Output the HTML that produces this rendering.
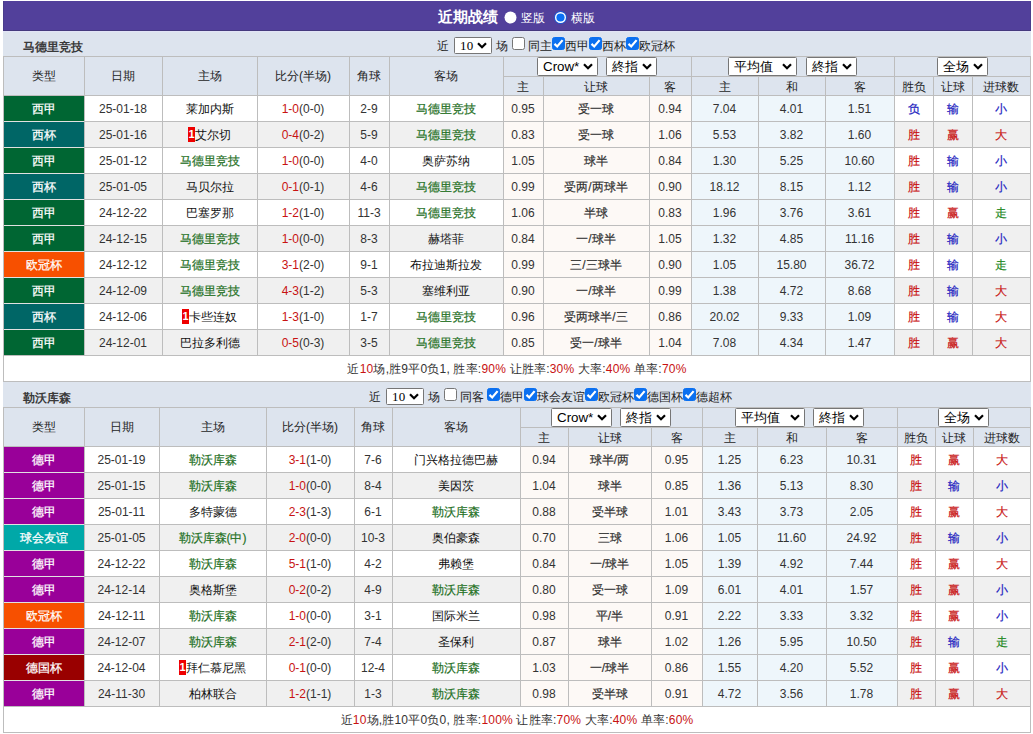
<!DOCTYPE html>
<html><head><meta charset="utf-8"><style>
html,body{margin:0;padding:0;background:#fff;width:1033px;height:734px;overflow:hidden}
body{position:relative;font-family:"Liberation Sans",sans-serif;font-size:12px;color:#333}
.r{position:absolute}
.t{position:absolute;text-align:center;white-space:nowrap;overflow:visible}
.b{font-weight:bold}
.k{-webkit-text-stroke:0.2px currentColor}
.h{color:#1e1e1e}
.lg{color:#fff;-webkit-text-stroke:0.25px #fff}
.rc{display:inline-block;background:#e00;color:#fff;font-weight:bold;width:7px;height:15px;line-height:15px;font-size:11px;text-align:center;vertical-align:middle;margin-top:-2px;position:relative;top:0px}
.cb{position:absolute;width:11px;height:11px;border:1px solid #767676;border-radius:2.5px;background:#fff}
.cb.on{background:#0b70f0;border-color:#0b70f0}
.cb svg{position:absolute;left:-1px;top:-1px}
.sel{position:absolute;border:1px solid #767676;border-radius:1.5px;background:#fff;color:#000;box-sizing:border-box;white-space:nowrap}
#title{position:absolute;left:3px;top:1px;width:1026px;height:29px;background:#52409b;border:1px solid #4a3d8c;border-bottom-color:#453a7e;border-top:0}
</style></head><body>
<div id="title"></div>
<div class="t b" style="left:438px;top:2px;height:30px;line-height:30px;font-size:15px;color:#fff;text-align:left">近期战绩</div>
<svg style="position:absolute;left:504px;top:11px" width="13" height="13" viewBox="0 0 13 13"><circle cx="6.5" cy="6.5" r="6" fill="#fff"/></svg>
<div class="t" style="left:521px;top:3px;height:30px;line-height:30px;color:#fff;text-align:left">竖版</div>
<svg style="position:absolute;left:554px;top:11px" width="13" height="13" viewBox="0 0 13 13"><circle cx="6.5" cy="6.5" r="6.5" fill="#1a5ad8"/><circle cx="6.5" cy="6.5" r="5.5" fill="#fff"/><circle cx="6.5" cy="6.5" r="4.1" fill="#0a70f5"/></svg>
<div class="t" style="left:571px;top:3px;height:30px;line-height:30px;color:#fff;text-align:left">横版</div>
<div class="r" style="left:3px;top:31px;width:1028px;height:25px;background:#dde4ee;"></div><div class="t b" style="left:23px;top:35px;width:200px;height:25px;line-height:25px;text-align:left;color:#3a3a3a">马德里竞技</div><div class="t" style="left:437px;top:34px;width:14px;height:25px;line-height:25px;text-align:left;color:#222">近</div><div class="sel" style="left:454px;top:37px;width:38px;height:17px;line-height:15px;padding-left:5px;font-size:13.33px"><span style="font-family:'Liberation Serif',serif;font-size:13px;letter-spacing:0.3px">10</span><svg style="position:absolute;right:4px;top:4px" width="10" height="7" viewBox="0 0 10 7"><path d="M1 1.2 L5 5.2 L9 1.2" stroke="#000" stroke-width="2.2" fill="none"/></svg></div><div class="t" style="left:496px;top:34px;width:14px;height:25px;line-height:25px;text-align:left;color:#222">场</div><div class="cb" style="left:512px;top:37px"></div><div class="t" style="left:528px;top:34px;width:24px;height:25px;line-height:25px;text-align:left;color:#222">同主</div><div class="cb on" style="left:552px;top:37px"><svg width="13" height="13" viewBox="0 0 13 13"><path d="M2.5 6.9 L5.2 9.5 L10.6 3.1" stroke="#fff" stroke-width="2.2" fill="none"/></svg></div><div class="t" style="left:565px;top:34px;width:24px;height:25px;line-height:25px;text-align:left;color:#222">西甲</div><div class="cb on" style="left:589px;top:37px"><svg width="13" height="13" viewBox="0 0 13 13"><path d="M2.5 6.9 L5.2 9.5 L10.6 3.1" stroke="#fff" stroke-width="2.2" fill="none"/></svg></div><div class="t" style="left:602px;top:34px;width:24px;height:25px;line-height:25px;text-align:left;color:#222">西杯</div><div class="cb on" style="left:626px;top:37px"><svg width="13" height="13" viewBox="0 0 13 13"><path d="M2.5 6.9 L5.2 9.5 L10.6 3.1" stroke="#fff" stroke-width="2.2" fill="none"/></svg></div><div class="t" style="left:639px;top:34px;width:36px;height:25px;line-height:25px;text-align:left;color:#222">欧冠杯</div><div class="r" style="left:3px;top:56px;width:1028px;height:39px;background:#dde4ee;"></div><div class="r" style="left:4px;top:96px;width:1026px;height:25px;background:#ffffff;"></div><div class="r" style="left:504px;top:96px;width:187px;height:25px;background:#fdf9f6;"></div><div class="r" style="left:692px;top:96px;width:202px;height:25px;background:#eef6fb;"></div><div class="r" style="left:4px;top:96px;width:80px;height:25px;background:#006633;"></div><div class="r" style="left:4px;top:122px;width:1026px;height:25px;background:#f0f0f0;"></div><div class="r" style="left:504px;top:122px;width:187px;height:25px;background:#fdf9f6;"></div><div class="r" style="left:692px;top:122px;width:202px;height:25px;background:#eef6fb;"></div><div class="r" style="left:4px;top:121px;width:80px;height:26px;background:#006666;"></div><div class="r" style="left:4px;top:148px;width:1026px;height:25px;background:#ffffff;"></div><div class="r" style="left:504px;top:148px;width:187px;height:25px;background:#fdf9f6;"></div><div class="r" style="left:692px;top:148px;width:202px;height:25px;background:#eef6fb;"></div><div class="r" style="left:4px;top:147px;width:80px;height:26px;background:#006633;"></div><div class="r" style="left:4px;top:174px;width:1026px;height:25px;background:#f0f0f0;"></div><div class="r" style="left:504px;top:174px;width:187px;height:25px;background:#fdf9f6;"></div><div class="r" style="left:692px;top:174px;width:202px;height:25px;background:#eef6fb;"></div><div class="r" style="left:4px;top:173px;width:80px;height:26px;background:#006666;"></div><div class="r" style="left:4px;top:200px;width:1026px;height:25px;background:#ffffff;"></div><div class="r" style="left:504px;top:200px;width:187px;height:25px;background:#fdf9f6;"></div><div class="r" style="left:692px;top:200px;width:202px;height:25px;background:#eef6fb;"></div><div class="r" style="left:4px;top:199px;width:80px;height:26px;background:#006633;"></div><div class="r" style="left:4px;top:226px;width:1026px;height:25px;background:#f0f0f0;"></div><div class="r" style="left:504px;top:226px;width:187px;height:25px;background:#fdf9f6;"></div><div class="r" style="left:692px;top:226px;width:202px;height:25px;background:#eef6fb;"></div><div class="r" style="left:4px;top:225px;width:80px;height:26px;background:#006633;"></div><div class="r" style="left:4px;top:252px;width:1026px;height:25px;background:#ffffff;"></div><div class="r" style="left:504px;top:252px;width:187px;height:25px;background:#fdf9f6;"></div><div class="r" style="left:692px;top:252px;width:202px;height:25px;background:#eef6fb;"></div><div class="r" style="left:4px;top:251px;width:80px;height:26px;background:#f75000;"></div><div class="r" style="left:4px;top:278px;width:1026px;height:25px;background:#f0f0f0;"></div><div class="r" style="left:504px;top:278px;width:187px;height:25px;background:#fdf9f6;"></div><div class="r" style="left:692px;top:278px;width:202px;height:25px;background:#eef6fb;"></div><div class="r" style="left:4px;top:277px;width:80px;height:26px;background:#006633;"></div><div class="r" style="left:4px;top:304px;width:1026px;height:25px;background:#ffffff;"></div><div class="r" style="left:504px;top:304px;width:187px;height:25px;background:#fdf9f6;"></div><div class="r" style="left:692px;top:304px;width:202px;height:25px;background:#eef6fb;"></div><div class="r" style="left:4px;top:303px;width:80px;height:26px;background:#006666;"></div><div class="r" style="left:4px;top:330px;width:1026px;height:25px;background:#f0f0f0;"></div><div class="r" style="left:504px;top:330px;width:187px;height:25px;background:#fdf9f6;"></div><div class="r" style="left:692px;top:330px;width:202px;height:25px;background:#eef6fb;"></div><div class="r" style="left:4px;top:329px;width:80px;height:26px;background:#006633;"></div><div class="r" style="left:4px;top:356px;width:1026px;height:25px;background:#ffffff;"></div><div class="r" style="left:3px;top:56px;width:1028px;height:1px;background:#bdbdbd;"></div><div class="r" style="left:3px;top:95px;width:1028px;height:1px;background:#bdbdbd;"></div><div class="r" style="left:3px;top:121px;width:1028px;height:1px;background:#bdbdbd;"></div><div class="r" style="left:3px;top:147px;width:1028px;height:1px;background:#bdbdbd;"></div><div class="r" style="left:3px;top:173px;width:1028px;height:1px;background:#bdbdbd;"></div><div class="r" style="left:3px;top:199px;width:1028px;height:1px;background:#bdbdbd;"></div><div class="r" style="left:3px;top:225px;width:1028px;height:1px;background:#bdbdbd;"></div><div class="r" style="left:3px;top:251px;width:1028px;height:1px;background:#bdbdbd;"></div><div class="r" style="left:3px;top:277px;width:1028px;height:1px;background:#bdbdbd;"></div><div class="r" style="left:3px;top:303px;width:1028px;height:1px;background:#bdbdbd;"></div><div class="r" style="left:3px;top:329px;width:1028px;height:1px;background:#bdbdbd;"></div><div class="r" style="left:3px;top:355px;width:1028px;height:1px;background:#bdbdbd;"></div><div class="r" style="left:3px;top:381px;width:1028px;height:1px;background:#bdbdbd;"></div><div class="r" style="left:503px;top:76px;width:527px;height:1px;background:#bdbdbd;"></div><div class="r" style="left:3px;top:56px;width:1px;height:326px;background:#bdbdbd;"></div><div class="r" style="left:84px;top:56px;width:1px;height:299px;background:#bdbdbd;"></div><div class="r" style="left:162px;top:56px;width:1px;height:299px;background:#bdbdbd;"></div><div class="r" style="left:257px;top:56px;width:1px;height:299px;background:#bdbdbd;"></div><div class="r" style="left:349px;top:56px;width:1px;height:299px;background:#bdbdbd;"></div><div class="r" style="left:389px;top:56px;width:1px;height:299px;background:#bdbdbd;"></div><div class="r" style="left:503px;top:56px;width:1px;height:299px;background:#bdbdbd;"></div><div class="r" style="left:543px;top:76px;width:1px;height:279px;background:#bdbdbd;"></div><div class="r" style="left:649px;top:76px;width:1px;height:279px;background:#bdbdbd;"></div><div class="r" style="left:691px;top:56px;width:1px;height:299px;background:#bdbdbd;"></div><div class="r" style="left:758px;top:76px;width:1px;height:279px;background:#bdbdbd;"></div><div class="r" style="left:825px;top:76px;width:1px;height:279px;background:#bdbdbd;"></div><div class="r" style="left:894px;top:56px;width:1px;height:299px;background:#bdbdbd;"></div><div class="r" style="left:933px;top:76px;width:1px;height:279px;background:#bdbdbd;"></div><div class="r" style="left:972px;top:76px;width:1px;height:279px;background:#bdbdbd;"></div><div class="r" style="left:1030px;top:56px;width:1px;height:326px;background:#bdbdbd;"></div><div class="r" style="left:4px;top:121px;width:80px;height:1px;background:rgba(255,255,255,0.55);"></div><div class="r" style="left:4px;top:147px;width:80px;height:1px;background:rgba(255,255,255,0.55);"></div><div class="r" style="left:4px;top:173px;width:80px;height:1px;background:rgba(255,255,255,0.55);"></div><div class="r" style="left:4px;top:199px;width:80px;height:1px;background:rgba(255,255,255,0.55);"></div><div class="r" style="left:4px;top:225px;width:80px;height:1px;background:rgba(255,255,255,0.55);"></div><div class="r" style="left:4px;top:251px;width:80px;height:1px;background:rgba(255,255,255,0.55);"></div><div class="r" style="left:4px;top:277px;width:80px;height:1px;background:rgba(255,255,255,0.55);"></div><div class="r" style="left:4px;top:303px;width:80px;height:1px;background:rgba(255,255,255,0.55);"></div><div class="r" style="left:4px;top:329px;width:80px;height:1px;background:rgba(255,255,255,0.55);"></div><div class="t h" style="left:4px;top:57px;width:79px;height:38px;line-height:38px;">类型</div><div class="t h" style="left:85px;top:57px;width:76px;height:38px;line-height:38px;">日期</div><div class="t h" style="left:163px;top:57px;width:93px;height:38px;line-height:38px;">主场</div><div class="t h" style="left:258px;top:57px;width:90px;height:38px;line-height:38px;">比分(半场)</div><div class="t h" style="left:350px;top:57px;width:38px;height:38px;line-height:38px;">角球</div><div class="t h" style="left:390px;top:57px;width:112px;height:38px;line-height:38px;">客场</div><div class="t h" style="left:504px;top:78px;width:38px;height:18px;line-height:18px;">主</div><div class="t h" style="left:544px;top:78px;width:104px;height:18px;line-height:18px;">让球</div><div class="t h" style="left:650px;top:78px;width:40px;height:18px;line-height:18px;">客</div><div class="t h" style="left:692px;top:78px;width:65px;height:18px;line-height:18px;">主</div><div class="t h" style="left:759px;top:78px;width:65px;height:18px;line-height:18px;">和</div><div class="t h" style="left:826px;top:78px;width:67px;height:18px;line-height:18px;">客</div><div class="t h" style="left:895px;top:78px;width:37px;height:18px;line-height:18px;">胜负</div><div class="t h" style="left:934px;top:78px;width:37px;height:18px;line-height:18px;">让球</div><div class="t h" style="left:973px;top:78px;width:56px;height:18px;line-height:18px;">进球数</div><div class="sel" style="left:537px;top:57px;width:61px;height:19px;line-height:17px;padding-left:5px;font-size:13.33px">Crow*<svg style="position:absolute;right:4px;top:5px" width="10" height="7" viewBox="0 0 10 7"><path d="M1 1.2 L5 5.2 L9 1.2" stroke="#000" stroke-width="2.2" fill="none"/></svg></div><div class="sel" style="left:606px;top:57px;width:51px;height:19px;line-height:17px;padding-left:5px;font-size:13.33px">終指<svg style="position:absolute;right:4px;top:5px" width="10" height="7" viewBox="0 0 10 7"><path d="M1 1.2 L5 5.2 L9 1.2" stroke="#000" stroke-width="2.2" fill="none"/></svg></div><div class="sel" style="left:728px;top:57px;width:69px;height:19px;line-height:17px;padding-left:5px;font-size:13.33px">平均值<svg style="position:absolute;right:4px;top:5px" width="10" height="7" viewBox="0 0 10 7"><path d="M1 1.2 L5 5.2 L9 1.2" stroke="#000" stroke-width="2.2" fill="none"/></svg></div><div class="sel" style="left:806px;top:57px;width:51px;height:19px;line-height:17px;padding-left:5px;font-size:13.33px">終指<svg style="position:absolute;right:4px;top:5px" width="10" height="7" viewBox="0 0 10 7"><path d="M1 1.2 L5 5.2 L9 1.2" stroke="#000" stroke-width="2.2" fill="none"/></svg></div><div class="sel" style="left:937px;top:57px;width:51px;height:19px;line-height:17px;padding-left:5px;font-size:13.33px">全场<svg style="position:absolute;right:4px;top:5px" width="10" height="7" viewBox="0 0 10 7"><path d="M1 1.2 L5 5.2 L9 1.2" stroke="#000" stroke-width="2.2" fill="none"/></svg></div><div class="t lg" style="left:4px;top:97px;width:79px;height:25px;line-height:25px;">西甲</div><div class="t" style="left:85px;top:97px;width:76px;height:25px;line-height:25px;">25-01-18</div><div class="t" style="left:163px;top:97px;width:93px;height:25px;line-height:25px;"><span style="color:#111">莱加内斯</span></div><div class="t" style="left:258px;top:97px;width:90px;height:25px;line-height:25px;"><span style="color:#c81212">1-0</span>(0-0)</div><div class="t" style="left:350px;top:97px;width:38px;height:25px;line-height:25px;">2-9</div><div class="t" style="left:390px;top:97px;width:112px;height:25px;line-height:25px;"><span class="k" style="color:#1f701f">马德里竞技</span></div><div class="t" style="left:504px;top:97px;width:38px;height:25px;line-height:25px;">0.95</div><div class="t k" style="left:544px;top:97px;width:104px;height:25px;line-height:25px;">受一球</div><div class="t" style="left:650px;top:97px;width:40px;height:25px;line-height:25px;">0.94</div><div class="t" style="left:692px;top:97px;width:65px;height:25px;line-height:25px;">7.04</div><div class="t" style="left:759px;top:97px;width:65px;height:25px;line-height:25px;">4.01</div><div class="t" style="left:826px;top:97px;width:67px;height:25px;line-height:25px;">1.51</div><div class="t k" style="left:895px;top:97px;width:37px;height:25px;line-height:25px;color:#1c1cc0">负</div><div class="t k" style="left:934px;top:97px;width:37px;height:25px;line-height:25px;color:#1c1cc0">输</div><div class="t k" style="left:973px;top:97px;width:56px;height:25px;line-height:25px;color:#1c1cc0">小</div><div class="t lg" style="left:4px;top:123px;width:79px;height:25px;line-height:25px;">西杯</div><div class="t" style="left:85px;top:123px;width:76px;height:25px;line-height:25px;">25-01-16</div><div class="t" style="left:163px;top:123px;width:93px;height:25px;line-height:25px;"><span class="rc">1</span><span style="color:#111">艾尔切</span></div><div class="t" style="left:258px;top:123px;width:90px;height:25px;line-height:25px;"><span style="color:#c81212">0-4</span>(0-2)</div><div class="t" style="left:350px;top:123px;width:38px;height:25px;line-height:25px;">5-9</div><div class="t" style="left:390px;top:123px;width:112px;height:25px;line-height:25px;"><span class="k" style="color:#1f701f">马德里竞技</span></div><div class="t" style="left:504px;top:123px;width:38px;height:25px;line-height:25px;">0.83</div><div class="t k" style="left:544px;top:123px;width:104px;height:25px;line-height:25px;">受一球</div><div class="t" style="left:650px;top:123px;width:40px;height:25px;line-height:25px;">1.06</div><div class="t" style="left:692px;top:123px;width:65px;height:25px;line-height:25px;">5.53</div><div class="t" style="left:759px;top:123px;width:65px;height:25px;line-height:25px;">3.82</div><div class="t" style="left:826px;top:123px;width:67px;height:25px;line-height:25px;">1.60</div><div class="t k" style="left:895px;top:123px;width:37px;height:25px;line-height:25px;color:#c81212">胜</div><div class="t k" style="left:934px;top:123px;width:37px;height:25px;line-height:25px;color:#c81212">赢</div><div class="t k" style="left:973px;top:123px;width:56px;height:25px;line-height:25px;color:#c81212">大</div><div class="t lg" style="left:4px;top:149px;width:79px;height:25px;line-height:25px;">西甲</div><div class="t" style="left:85px;top:149px;width:76px;height:25px;line-height:25px;">25-01-12</div><div class="t" style="left:163px;top:149px;width:93px;height:25px;line-height:25px;"><span class="k" style="color:#1f701f">马德里竞技</span></div><div class="t" style="left:258px;top:149px;width:90px;height:25px;line-height:25px;"><span style="color:#c81212">1-0</span>(0-0)</div><div class="t" style="left:350px;top:149px;width:38px;height:25px;line-height:25px;">4-0</div><div class="t" style="left:390px;top:149px;width:112px;height:25px;line-height:25px;"><span style="color:#111">奥萨苏纳</span></div><div class="t" style="left:504px;top:149px;width:38px;height:25px;line-height:25px;">1.05</div><div class="t k" style="left:544px;top:149px;width:104px;height:25px;line-height:25px;">球半</div><div class="t" style="left:650px;top:149px;width:40px;height:25px;line-height:25px;">0.84</div><div class="t" style="left:692px;top:149px;width:65px;height:25px;line-height:25px;">1.30</div><div class="t" style="left:759px;top:149px;width:65px;height:25px;line-height:25px;">5.25</div><div class="t" style="left:826px;top:149px;width:67px;height:25px;line-height:25px;">10.60</div><div class="t k" style="left:895px;top:149px;width:37px;height:25px;line-height:25px;color:#c81212">胜</div><div class="t k" style="left:934px;top:149px;width:37px;height:25px;line-height:25px;color:#1c1cc0">输</div><div class="t k" style="left:973px;top:149px;width:56px;height:25px;line-height:25px;color:#1c1cc0">小</div><div class="t lg" style="left:4px;top:175px;width:79px;height:25px;line-height:25px;">西杯</div><div class="t" style="left:85px;top:175px;width:76px;height:25px;line-height:25px;">25-01-05</div><div class="t" style="left:163px;top:175px;width:93px;height:25px;line-height:25px;"><span style="color:#111">马贝尔拉</span></div><div class="t" style="left:258px;top:175px;width:90px;height:25px;line-height:25px;"><span style="color:#c81212">0-1</span>(0-1)</div><div class="t" style="left:350px;top:175px;width:38px;height:25px;line-height:25px;">4-6</div><div class="t" style="left:390px;top:175px;width:112px;height:25px;line-height:25px;"><span class="k" style="color:#1f701f">马德里竞技</span></div><div class="t" style="left:504px;top:175px;width:38px;height:25px;line-height:25px;">0.99</div><div class="t k" style="left:544px;top:175px;width:104px;height:25px;line-height:25px;">受两/两球半</div><div class="t" style="left:650px;top:175px;width:40px;height:25px;line-height:25px;">0.90</div><div class="t" style="left:692px;top:175px;width:65px;height:25px;line-height:25px;">18.12</div><div class="t" style="left:759px;top:175px;width:65px;height:25px;line-height:25px;">8.15</div><div class="t" style="left:826px;top:175px;width:67px;height:25px;line-height:25px;">1.12</div><div class="t k" style="left:895px;top:175px;width:37px;height:25px;line-height:25px;color:#c81212">胜</div><div class="t k" style="left:934px;top:175px;width:37px;height:25px;line-height:25px;color:#1c1cc0">输</div><div class="t k" style="left:973px;top:175px;width:56px;height:25px;line-height:25px;color:#1c1cc0">小</div><div class="t lg" style="left:4px;top:201px;width:79px;height:25px;line-height:25px;">西甲</div><div class="t" style="left:85px;top:201px;width:76px;height:25px;line-height:25px;">24-12-22</div><div class="t" style="left:163px;top:201px;width:93px;height:25px;line-height:25px;"><span style="color:#111">巴塞罗那</span></div><div class="t" style="left:258px;top:201px;width:90px;height:25px;line-height:25px;"><span style="color:#c81212">1-2</span>(1-0)</div><div class="t" style="left:350px;top:201px;width:38px;height:25px;line-height:25px;">11-3</div><div class="t" style="left:390px;top:201px;width:112px;height:25px;line-height:25px;"><span class="k" style="color:#1f701f">马德里竞技</span></div><div class="t" style="left:504px;top:201px;width:38px;height:25px;line-height:25px;">1.06</div><div class="t k" style="left:544px;top:201px;width:104px;height:25px;line-height:25px;">半球</div><div class="t" style="left:650px;top:201px;width:40px;height:25px;line-height:25px;">0.83</div><div class="t" style="left:692px;top:201px;width:65px;height:25px;line-height:25px;">1.96</div><div class="t" style="left:759px;top:201px;width:65px;height:25px;line-height:25px;">3.76</div><div class="t" style="left:826px;top:201px;width:67px;height:25px;line-height:25px;">3.61</div><div class="t k" style="left:895px;top:201px;width:37px;height:25px;line-height:25px;color:#c81212">胜</div><div class="t k" style="left:934px;top:201px;width:37px;height:25px;line-height:25px;color:#c81212">赢</div><div class="t k" style="left:973px;top:201px;width:56px;height:25px;line-height:25px;color:#228822">走</div><div class="t lg" style="left:4px;top:227px;width:79px;height:25px;line-height:25px;">西甲</div><div class="t" style="left:85px;top:227px;width:76px;height:25px;line-height:25px;">24-12-15</div><div class="t" style="left:163px;top:227px;width:93px;height:25px;line-height:25px;"><span class="k" style="color:#1f701f">马德里竞技</span></div><div class="t" style="left:258px;top:227px;width:90px;height:25px;line-height:25px;"><span style="color:#c81212">1-0</span>(0-0)</div><div class="t" style="left:350px;top:227px;width:38px;height:25px;line-height:25px;">8-3</div><div class="t" style="left:390px;top:227px;width:112px;height:25px;line-height:25px;"><span style="color:#111">赫塔菲</span></div><div class="t" style="left:504px;top:227px;width:38px;height:25px;line-height:25px;">0.84</div><div class="t k" style="left:544px;top:227px;width:104px;height:25px;line-height:25px;">一/球半</div><div class="t" style="left:650px;top:227px;width:40px;height:25px;line-height:25px;">1.05</div><div class="t" style="left:692px;top:227px;width:65px;height:25px;line-height:25px;">1.32</div><div class="t" style="left:759px;top:227px;width:65px;height:25px;line-height:25px;">4.85</div><div class="t" style="left:826px;top:227px;width:67px;height:25px;line-height:25px;">11.16</div><div class="t k" style="left:895px;top:227px;width:37px;height:25px;line-height:25px;color:#c81212">胜</div><div class="t k" style="left:934px;top:227px;width:37px;height:25px;line-height:25px;color:#1c1cc0">输</div><div class="t k" style="left:973px;top:227px;width:56px;height:25px;line-height:25px;color:#1c1cc0">小</div><div class="t lg" style="left:4px;top:253px;width:79px;height:25px;line-height:25px;">欧冠杯</div><div class="t" style="left:85px;top:253px;width:76px;height:25px;line-height:25px;">24-12-12</div><div class="t" style="left:163px;top:253px;width:93px;height:25px;line-height:25px;"><span class="k" style="color:#1f701f">马德里竞技</span></div><div class="t" style="left:258px;top:253px;width:90px;height:25px;line-height:25px;"><span style="color:#c81212">3-1</span>(2-0)</div><div class="t" style="left:350px;top:253px;width:38px;height:25px;line-height:25px;">9-1</div><div class="t" style="left:390px;top:253px;width:112px;height:25px;line-height:25px;"><span style="color:#111">布拉迪斯拉发</span></div><div class="t" style="left:504px;top:253px;width:38px;height:25px;line-height:25px;">0.99</div><div class="t k" style="left:544px;top:253px;width:104px;height:25px;line-height:25px;">三/三球半</div><div class="t" style="left:650px;top:253px;width:40px;height:25px;line-height:25px;">0.90</div><div class="t" style="left:692px;top:253px;width:65px;height:25px;line-height:25px;">1.05</div><div class="t" style="left:759px;top:253px;width:65px;height:25px;line-height:25px;">15.80</div><div class="t" style="left:826px;top:253px;width:67px;height:25px;line-height:25px;">36.72</div><div class="t k" style="left:895px;top:253px;width:37px;height:25px;line-height:25px;color:#c81212">胜</div><div class="t k" style="left:934px;top:253px;width:37px;height:25px;line-height:25px;color:#1c1cc0">输</div><div class="t k" style="left:973px;top:253px;width:56px;height:25px;line-height:25px;color:#228822">走</div><div class="t lg" style="left:4px;top:279px;width:79px;height:25px;line-height:25px;">西甲</div><div class="t" style="left:85px;top:279px;width:76px;height:25px;line-height:25px;">24-12-09</div><div class="t" style="left:163px;top:279px;width:93px;height:25px;line-height:25px;"><span class="k" style="color:#1f701f">马德里竞技</span></div><div class="t" style="left:258px;top:279px;width:90px;height:25px;line-height:25px;"><span style="color:#c81212">4-3</span>(1-2)</div><div class="t" style="left:350px;top:279px;width:38px;height:25px;line-height:25px;">5-3</div><div class="t" style="left:390px;top:279px;width:112px;height:25px;line-height:25px;"><span style="color:#111">塞维利亚</span></div><div class="t" style="left:504px;top:279px;width:38px;height:25px;line-height:25px;">0.90</div><div class="t k" style="left:544px;top:279px;width:104px;height:25px;line-height:25px;">一/球半</div><div class="t" style="left:650px;top:279px;width:40px;height:25px;line-height:25px;">0.99</div><div class="t" style="left:692px;top:279px;width:65px;height:25px;line-height:25px;">1.38</div><div class="t" style="left:759px;top:279px;width:65px;height:25px;line-height:25px;">4.72</div><div class="t" style="left:826px;top:279px;width:67px;height:25px;line-height:25px;">8.68</div><div class="t k" style="left:895px;top:279px;width:37px;height:25px;line-height:25px;color:#c81212">胜</div><div class="t k" style="left:934px;top:279px;width:37px;height:25px;line-height:25px;color:#1c1cc0">输</div><div class="t k" style="left:973px;top:279px;width:56px;height:25px;line-height:25px;color:#c81212">大</div><div class="t lg" style="left:4px;top:305px;width:79px;height:25px;line-height:25px;">西杯</div><div class="t" style="left:85px;top:305px;width:76px;height:25px;line-height:25px;">24-12-06</div><div class="t" style="left:163px;top:305px;width:93px;height:25px;line-height:25px;"><span class="rc">1</span><span style="color:#111">卡些连奴</span></div><div class="t" style="left:258px;top:305px;width:90px;height:25px;line-height:25px;"><span style="color:#c81212">1-3</span>(1-0)</div><div class="t" style="left:350px;top:305px;width:38px;height:25px;line-height:25px;">1-7</div><div class="t" style="left:390px;top:305px;width:112px;height:25px;line-height:25px;"><span class="k" style="color:#1f701f">马德里竞技</span></div><div class="t" style="left:504px;top:305px;width:38px;height:25px;line-height:25px;">0.96</div><div class="t k" style="left:544px;top:305px;width:104px;height:25px;line-height:25px;">受两球半/三</div><div class="t" style="left:650px;top:305px;width:40px;height:25px;line-height:25px;">0.86</div><div class="t" style="left:692px;top:305px;width:65px;height:25px;line-height:25px;">20.02</div><div class="t" style="left:759px;top:305px;width:65px;height:25px;line-height:25px;">9.33</div><div class="t" style="left:826px;top:305px;width:67px;height:25px;line-height:25px;">1.09</div><div class="t k" style="left:895px;top:305px;width:37px;height:25px;line-height:25px;color:#c81212">胜</div><div class="t k" style="left:934px;top:305px;width:37px;height:25px;line-height:25px;color:#1c1cc0">输</div><div class="t k" style="left:973px;top:305px;width:56px;height:25px;line-height:25px;color:#c81212">大</div><div class="t lg" style="left:4px;top:331px;width:79px;height:25px;line-height:25px;">西甲</div><div class="t" style="left:85px;top:331px;width:76px;height:25px;line-height:25px;">24-12-01</div><div class="t" style="left:163px;top:331px;width:93px;height:25px;line-height:25px;"><span style="color:#111">巴拉多利德</span></div><div class="t" style="left:258px;top:331px;width:90px;height:25px;line-height:25px;"><span style="color:#c81212">0-5</span>(0-3)</div><div class="t" style="left:350px;top:331px;width:38px;height:25px;line-height:25px;">3-5</div><div class="t" style="left:390px;top:331px;width:112px;height:25px;line-height:25px;"><span class="k" style="color:#1f701f">马德里竞技</span></div><div class="t" style="left:504px;top:331px;width:38px;height:25px;line-height:25px;">0.85</div><div class="t k" style="left:544px;top:331px;width:104px;height:25px;line-height:25px;">受一/球半</div><div class="t" style="left:650px;top:331px;width:40px;height:25px;line-height:25px;">1.04</div><div class="t" style="left:692px;top:331px;width:65px;height:25px;line-height:25px;">7.08</div><div class="t" style="left:759px;top:331px;width:65px;height:25px;line-height:25px;">4.34</div><div class="t" style="left:826px;top:331px;width:67px;height:25px;line-height:25px;">1.47</div><div class="t k" style="left:895px;top:331px;width:37px;height:25px;line-height:25px;color:#c81212">胜</div><div class="t k" style="left:934px;top:331px;width:37px;height:25px;line-height:25px;color:#c81212">赢</div><div class="t k" style="left:973px;top:331px;width:56px;height:25px;line-height:25px;color:#c81212">大</div><div class="t" style="left:4px;top:357px;width:1026px;height:25px;line-height:25px;letter-spacing:0.2px">近<span style="color:#c81212">10</span>场,胜9平0负1, 胜率:<span style="color:#c81212">90%</span> 让胜率:<span style="color:#c81212">30%</span> 大率:<span style="color:#c81212">40%</span> 单率:<span style="color:#c81212">70%</span></div><div class="r" style="left:3px;top:382px;width:1028px;height:25px;background:#dde4ee;"></div><div class="t b" style="left:23px;top:386px;width:200px;height:25px;line-height:25px;text-align:left;color:#3a3a3a">勒沃库森</div><div class="t" style="left:369px;top:385px;width:14px;height:25px;line-height:25px;text-align:left;color:#222">近</div><div class="sel" style="left:386px;top:388px;width:38px;height:17px;line-height:15px;padding-left:5px;font-size:13.33px"><span style="font-family:'Liberation Serif',serif;font-size:13px;letter-spacing:0.3px">10</span><svg style="position:absolute;right:4px;top:4px" width="10" height="7" viewBox="0 0 10 7"><path d="M1 1.2 L5 5.2 L9 1.2" stroke="#000" stroke-width="2.2" fill="none"/></svg></div><div class="t" style="left:428px;top:385px;width:14px;height:25px;line-height:25px;text-align:left;color:#222">场</div><div class="cb" style="left:444px;top:388px"></div><div class="t" style="left:460px;top:385px;width:24px;height:25px;line-height:25px;text-align:left;color:#222">同客</div><div class="cb on" style="left:487px;top:388px"><svg width="13" height="13" viewBox="0 0 13 13"><path d="M2.5 6.9 L5.2 9.5 L10.6 3.1" stroke="#fff" stroke-width="2.2" fill="none"/></svg></div><div class="t" style="left:500px;top:385px;width:24px;height:25px;line-height:25px;text-align:left;color:#222">德甲</div><div class="cb on" style="left:524px;top:388px"><svg width="13" height="13" viewBox="0 0 13 13"><path d="M2.5 6.9 L5.2 9.5 L10.6 3.1" stroke="#fff" stroke-width="2.2" fill="none"/></svg></div><div class="t" style="left:537px;top:385px;width:48px;height:25px;line-height:25px;text-align:left;color:#222">球会友谊</div><div class="cb on" style="left:585px;top:388px"><svg width="13" height="13" viewBox="0 0 13 13"><path d="M2.5 6.9 L5.2 9.5 L10.6 3.1" stroke="#fff" stroke-width="2.2" fill="none"/></svg></div><div class="t" style="left:598px;top:385px;width:36px;height:25px;line-height:25px;text-align:left;color:#222">欧冠杯</div><div class="cb on" style="left:634px;top:388px"><svg width="13" height="13" viewBox="0 0 13 13"><path d="M2.5 6.9 L5.2 9.5 L10.6 3.1" stroke="#fff" stroke-width="2.2" fill="none"/></svg></div><div class="t" style="left:647px;top:385px;width:36px;height:25px;line-height:25px;text-align:left;color:#222">德国杯</div><div class="cb on" style="left:683px;top:388px"><svg width="13" height="13" viewBox="0 0 13 13"><path d="M2.5 6.9 L5.2 9.5 L10.6 3.1" stroke="#fff" stroke-width="2.2" fill="none"/></svg></div><div class="t" style="left:696px;top:385px;width:36px;height:25px;line-height:25px;text-align:left;color:#222">德超杯</div><div class="r" style="left:3px;top:407px;width:1028px;height:39px;background:#dde4ee;"></div><div class="r" style="left:4px;top:447px;width:1026px;height:25px;background:#ffffff;"></div><div class="r" style="left:521px;top:447px;width:181px;height:25px;background:#fdf9f6;"></div><div class="r" style="left:703px;top:447px;width:194px;height:25px;background:#eef6fb;"></div><div class="r" style="left:4px;top:447px;width:80px;height:25px;background:#990099;"></div><div class="r" style="left:4px;top:473px;width:1026px;height:25px;background:#f0f0f0;"></div><div class="r" style="left:521px;top:473px;width:181px;height:25px;background:#fdf9f6;"></div><div class="r" style="left:703px;top:473px;width:194px;height:25px;background:#eef6fb;"></div><div class="r" style="left:4px;top:472px;width:80px;height:26px;background:#990099;"></div><div class="r" style="left:4px;top:499px;width:1026px;height:25px;background:#ffffff;"></div><div class="r" style="left:521px;top:499px;width:181px;height:25px;background:#fdf9f6;"></div><div class="r" style="left:703px;top:499px;width:194px;height:25px;background:#eef6fb;"></div><div class="r" style="left:4px;top:498px;width:80px;height:26px;background:#990099;"></div><div class="r" style="left:4px;top:525px;width:1026px;height:25px;background:#f0f0f0;"></div><div class="r" style="left:521px;top:525px;width:181px;height:25px;background:#fdf9f6;"></div><div class="r" style="left:703px;top:525px;width:194px;height:25px;background:#eef6fb;"></div><div class="r" style="left:4px;top:524px;width:80px;height:26px;background:#00a8a8;"></div><div class="r" style="left:4px;top:551px;width:1026px;height:25px;background:#ffffff;"></div><div class="r" style="left:521px;top:551px;width:181px;height:25px;background:#fdf9f6;"></div><div class="r" style="left:703px;top:551px;width:194px;height:25px;background:#eef6fb;"></div><div class="r" style="left:4px;top:550px;width:80px;height:26px;background:#990099;"></div><div class="r" style="left:4px;top:577px;width:1026px;height:25px;background:#f0f0f0;"></div><div class="r" style="left:521px;top:577px;width:181px;height:25px;background:#fdf9f6;"></div><div class="r" style="left:703px;top:577px;width:194px;height:25px;background:#eef6fb;"></div><div class="r" style="left:4px;top:576px;width:80px;height:26px;background:#990099;"></div><div class="r" style="left:4px;top:603px;width:1026px;height:25px;background:#ffffff;"></div><div class="r" style="left:521px;top:603px;width:181px;height:25px;background:#fdf9f6;"></div><div class="r" style="left:703px;top:603px;width:194px;height:25px;background:#eef6fb;"></div><div class="r" style="left:4px;top:602px;width:80px;height:26px;background:#f75000;"></div><div class="r" style="left:4px;top:629px;width:1026px;height:25px;background:#f0f0f0;"></div><div class="r" style="left:521px;top:629px;width:181px;height:25px;background:#fdf9f6;"></div><div class="r" style="left:703px;top:629px;width:194px;height:25px;background:#eef6fb;"></div><div class="r" style="left:4px;top:628px;width:80px;height:26px;background:#990099;"></div><div class="r" style="left:4px;top:655px;width:1026px;height:25px;background:#ffffff;"></div><div class="r" style="left:521px;top:655px;width:181px;height:25px;background:#fdf9f6;"></div><div class="r" style="left:703px;top:655px;width:194px;height:25px;background:#eef6fb;"></div><div class="r" style="left:4px;top:654px;width:80px;height:26px;background:#990000;"></div><div class="r" style="left:4px;top:681px;width:1026px;height:25px;background:#f0f0f0;"></div><div class="r" style="left:521px;top:681px;width:181px;height:25px;background:#fdf9f6;"></div><div class="r" style="left:703px;top:681px;width:194px;height:25px;background:#eef6fb;"></div><div class="r" style="left:4px;top:680px;width:80px;height:26px;background:#990099;"></div><div class="r" style="left:4px;top:707px;width:1026px;height:25px;background:#ffffff;"></div><div class="r" style="left:3px;top:407px;width:1028px;height:1px;background:#bdbdbd;"></div><div class="r" style="left:3px;top:446px;width:1028px;height:1px;background:#bdbdbd;"></div><div class="r" style="left:3px;top:472px;width:1028px;height:1px;background:#bdbdbd;"></div><div class="r" style="left:3px;top:498px;width:1028px;height:1px;background:#bdbdbd;"></div><div class="r" style="left:3px;top:524px;width:1028px;height:1px;background:#bdbdbd;"></div><div class="r" style="left:3px;top:550px;width:1028px;height:1px;background:#bdbdbd;"></div><div class="r" style="left:3px;top:576px;width:1028px;height:1px;background:#bdbdbd;"></div><div class="r" style="left:3px;top:602px;width:1028px;height:1px;background:#bdbdbd;"></div><div class="r" style="left:3px;top:628px;width:1028px;height:1px;background:#bdbdbd;"></div><div class="r" style="left:3px;top:654px;width:1028px;height:1px;background:#bdbdbd;"></div><div class="r" style="left:3px;top:680px;width:1028px;height:1px;background:#bdbdbd;"></div><div class="r" style="left:3px;top:706px;width:1028px;height:1px;background:#bdbdbd;"></div><div class="r" style="left:3px;top:732px;width:1028px;height:1px;background:#bdbdbd;"></div><div class="r" style="left:520px;top:427px;width:510px;height:1px;background:#bdbdbd;"></div><div class="r" style="left:3px;top:407px;width:1px;height:326px;background:#bdbdbd;"></div><div class="r" style="left:84px;top:407px;width:1px;height:299px;background:#bdbdbd;"></div><div class="r" style="left:159px;top:407px;width:1px;height:299px;background:#bdbdbd;"></div><div class="r" style="left:266px;top:407px;width:1px;height:299px;background:#bdbdbd;"></div><div class="r" style="left:354px;top:407px;width:1px;height:299px;background:#bdbdbd;"></div><div class="r" style="left:392px;top:407px;width:1px;height:299px;background:#bdbdbd;"></div><div class="r" style="left:520px;top:407px;width:1px;height:299px;background:#bdbdbd;"></div><div class="r" style="left:568px;top:427px;width:1px;height:279px;background:#bdbdbd;"></div><div class="r" style="left:651px;top:427px;width:1px;height:279px;background:#bdbdbd;"></div><div class="r" style="left:702px;top:407px;width:1px;height:299px;background:#bdbdbd;"></div><div class="r" style="left:757px;top:427px;width:1px;height:279px;background:#bdbdbd;"></div><div class="r" style="left:826px;top:427px;width:1px;height:279px;background:#bdbdbd;"></div><div class="r" style="left:897px;top:407px;width:1px;height:299px;background:#bdbdbd;"></div><div class="r" style="left:935px;top:427px;width:1px;height:279px;background:#bdbdbd;"></div><div class="r" style="left:973px;top:427px;width:1px;height:279px;background:#bdbdbd;"></div><div class="r" style="left:1030px;top:407px;width:1px;height:326px;background:#bdbdbd;"></div><div class="r" style="left:4px;top:472px;width:80px;height:1px;background:rgba(255,255,255,0.55);"></div><div class="r" style="left:4px;top:498px;width:80px;height:1px;background:rgba(255,255,255,0.55);"></div><div class="r" style="left:4px;top:524px;width:80px;height:1px;background:rgba(255,255,255,0.55);"></div><div class="r" style="left:4px;top:550px;width:80px;height:1px;background:rgba(255,255,255,0.55);"></div><div class="r" style="left:4px;top:576px;width:80px;height:1px;background:rgba(255,255,255,0.55);"></div><div class="r" style="left:4px;top:602px;width:80px;height:1px;background:rgba(255,255,255,0.55);"></div><div class="r" style="left:4px;top:628px;width:80px;height:1px;background:rgba(255,255,255,0.55);"></div><div class="r" style="left:4px;top:654px;width:80px;height:1px;background:rgba(255,255,255,0.55);"></div><div class="r" style="left:4px;top:680px;width:80px;height:1px;background:rgba(255,255,255,0.55);"></div><div class="t h" style="left:4px;top:408px;width:79px;height:38px;line-height:38px;">类型</div><div class="t h" style="left:85px;top:408px;width:73px;height:38px;line-height:38px;">日期</div><div class="t h" style="left:160px;top:408px;width:105px;height:38px;line-height:38px;">主场</div><div class="t h" style="left:267px;top:408px;width:86px;height:38px;line-height:38px;">比分(半场)</div><div class="t h" style="left:355px;top:408px;width:36px;height:38px;line-height:38px;">角球</div><div class="t h" style="left:393px;top:408px;width:126px;height:38px;line-height:38px;">客场</div><div class="t h" style="left:521px;top:429px;width:46px;height:18px;line-height:18px;">主</div><div class="t h" style="left:569px;top:429px;width:81px;height:18px;line-height:18px;">让球</div><div class="t h" style="left:652px;top:429px;width:49px;height:18px;line-height:18px;">客</div><div class="t h" style="left:703px;top:429px;width:53px;height:18px;line-height:18px;">主</div><div class="t h" style="left:758px;top:429px;width:67px;height:18px;line-height:18px;">和</div><div class="t h" style="left:827px;top:429px;width:69px;height:18px;line-height:18px;">客</div><div class="t h" style="left:898px;top:429px;width:36px;height:18px;line-height:18px;">胜负</div><div class="t h" style="left:936px;top:429px;width:36px;height:18px;line-height:18px;">让球</div><div class="t h" style="left:974px;top:429px;width:55px;height:18px;line-height:18px;">进球数</div><div class="sel" style="left:551px;top:408px;width:61px;height:19px;line-height:17px;padding-left:5px;font-size:13.33px">Crow*<svg style="position:absolute;right:4px;top:5px" width="10" height="7" viewBox="0 0 10 7"><path d="M1 1.2 L5 5.2 L9 1.2" stroke="#000" stroke-width="2.2" fill="none"/></svg></div><div class="sel" style="left:620px;top:408px;width:51px;height:19px;line-height:17px;padding-left:5px;font-size:13.33px">終指<svg style="position:absolute;right:4px;top:5px" width="10" height="7" viewBox="0 0 10 7"><path d="M1 1.2 L5 5.2 L9 1.2" stroke="#000" stroke-width="2.2" fill="none"/></svg></div><div class="sel" style="left:735px;top:408px;width:70px;height:19px;line-height:17px;padding-left:5px;font-size:13.33px">平均值<svg style="position:absolute;right:4px;top:5px" width="10" height="7" viewBox="0 0 10 7"><path d="M1 1.2 L5 5.2 L9 1.2" stroke="#000" stroke-width="2.2" fill="none"/></svg></div><div class="sel" style="left:813px;top:408px;width:51px;height:19px;line-height:17px;padding-left:5px;font-size:13.33px">終指<svg style="position:absolute;right:4px;top:5px" width="10" height="7" viewBox="0 0 10 7"><path d="M1 1.2 L5 5.2 L9 1.2" stroke="#000" stroke-width="2.2" fill="none"/></svg></div><div class="sel" style="left:938px;top:408px;width:51px;height:19px;line-height:17px;padding-left:5px;font-size:13.33px">全场<svg style="position:absolute;right:4px;top:5px" width="10" height="7" viewBox="0 0 10 7"><path d="M1 1.2 L5 5.2 L9 1.2" stroke="#000" stroke-width="2.2" fill="none"/></svg></div><div class="t lg" style="left:4px;top:448px;width:79px;height:25px;line-height:25px;">德甲</div><div class="t" style="left:85px;top:448px;width:73px;height:25px;line-height:25px;">25-01-19</div><div class="t" style="left:160px;top:448px;width:105px;height:25px;line-height:25px;"><span class="k" style="color:#1f701f">勒沃库森</span></div><div class="t" style="left:267px;top:448px;width:86px;height:25px;line-height:25px;"><span style="color:#c81212">3-1</span>(1-0)</div><div class="t" style="left:355px;top:448px;width:36px;height:25px;line-height:25px;">7-6</div><div class="t" style="left:393px;top:448px;width:126px;height:25px;line-height:25px;"><span style="color:#111">门兴格拉德巴赫</span></div><div class="t" style="left:521px;top:448px;width:46px;height:25px;line-height:25px;">0.94</div><div class="t k" style="left:569px;top:448px;width:81px;height:25px;line-height:25px;">球半/两</div><div class="t" style="left:652px;top:448px;width:49px;height:25px;line-height:25px;">0.95</div><div class="t" style="left:703px;top:448px;width:53px;height:25px;line-height:25px;">1.25</div><div class="t" style="left:758px;top:448px;width:67px;height:25px;line-height:25px;">6.23</div><div class="t" style="left:827px;top:448px;width:69px;height:25px;line-height:25px;">10.31</div><div class="t k" style="left:898px;top:448px;width:36px;height:25px;line-height:25px;color:#c81212">胜</div><div class="t k" style="left:936px;top:448px;width:36px;height:25px;line-height:25px;color:#c81212">赢</div><div class="t k" style="left:974px;top:448px;width:55px;height:25px;line-height:25px;color:#c81212">大</div><div class="t lg" style="left:4px;top:474px;width:79px;height:25px;line-height:25px;">德甲</div><div class="t" style="left:85px;top:474px;width:73px;height:25px;line-height:25px;">25-01-15</div><div class="t" style="left:160px;top:474px;width:105px;height:25px;line-height:25px;"><span class="k" style="color:#1f701f">勒沃库森</span></div><div class="t" style="left:267px;top:474px;width:86px;height:25px;line-height:25px;"><span style="color:#c81212">1-0</span>(0-0)</div><div class="t" style="left:355px;top:474px;width:36px;height:25px;line-height:25px;">8-4</div><div class="t" style="left:393px;top:474px;width:126px;height:25px;line-height:25px;"><span style="color:#111">美因茨</span></div><div class="t" style="left:521px;top:474px;width:46px;height:25px;line-height:25px;">1.04</div><div class="t k" style="left:569px;top:474px;width:81px;height:25px;line-height:25px;">球半</div><div class="t" style="left:652px;top:474px;width:49px;height:25px;line-height:25px;">0.85</div><div class="t" style="left:703px;top:474px;width:53px;height:25px;line-height:25px;">1.36</div><div class="t" style="left:758px;top:474px;width:67px;height:25px;line-height:25px;">5.13</div><div class="t" style="left:827px;top:474px;width:69px;height:25px;line-height:25px;">8.30</div><div class="t k" style="left:898px;top:474px;width:36px;height:25px;line-height:25px;color:#c81212">胜</div><div class="t k" style="left:936px;top:474px;width:36px;height:25px;line-height:25px;color:#1c1cc0">输</div><div class="t k" style="left:974px;top:474px;width:55px;height:25px;line-height:25px;color:#1c1cc0">小</div><div class="t lg" style="left:4px;top:500px;width:79px;height:25px;line-height:25px;">德甲</div><div class="t" style="left:85px;top:500px;width:73px;height:25px;line-height:25px;">25-01-11</div><div class="t" style="left:160px;top:500px;width:105px;height:25px;line-height:25px;"><span style="color:#111">多特蒙德</span></div><div class="t" style="left:267px;top:500px;width:86px;height:25px;line-height:25px;"><span style="color:#c81212">2-3</span>(1-3)</div><div class="t" style="left:355px;top:500px;width:36px;height:25px;line-height:25px;">6-1</div><div class="t" style="left:393px;top:500px;width:126px;height:25px;line-height:25px;"><span class="k" style="color:#1f701f">勒沃库森</span></div><div class="t" style="left:521px;top:500px;width:46px;height:25px;line-height:25px;">0.88</div><div class="t k" style="left:569px;top:500px;width:81px;height:25px;line-height:25px;">受半球</div><div class="t" style="left:652px;top:500px;width:49px;height:25px;line-height:25px;">1.01</div><div class="t" style="left:703px;top:500px;width:53px;height:25px;line-height:25px;">3.43</div><div class="t" style="left:758px;top:500px;width:67px;height:25px;line-height:25px;">3.73</div><div class="t" style="left:827px;top:500px;width:69px;height:25px;line-height:25px;">2.05</div><div class="t k" style="left:898px;top:500px;width:36px;height:25px;line-height:25px;color:#c81212">胜</div><div class="t k" style="left:936px;top:500px;width:36px;height:25px;line-height:25px;color:#c81212">赢</div><div class="t k" style="left:974px;top:500px;width:55px;height:25px;line-height:25px;color:#c81212">大</div><div class="t lg" style="left:4px;top:526px;width:79px;height:25px;line-height:25px;">球会友谊</div><div class="t" style="left:85px;top:526px;width:73px;height:25px;line-height:25px;">25-01-05</div><div class="t" style="left:160px;top:526px;width:105px;height:25px;line-height:25px;"><span class="k" style="color:#1f701f">勒沃库森(中)</span></div><div class="t" style="left:267px;top:526px;width:86px;height:25px;line-height:25px;"><span style="color:#c81212">2-0</span>(0-0)</div><div class="t" style="left:355px;top:526px;width:36px;height:25px;line-height:25px;">10-3</div><div class="t" style="left:393px;top:526px;width:126px;height:25px;line-height:25px;"><span style="color:#111">奥伯豪森</span></div><div class="t" style="left:521px;top:526px;width:46px;height:25px;line-height:25px;">0.70</div><div class="t k" style="left:569px;top:526px;width:81px;height:25px;line-height:25px;">三球</div><div class="t" style="left:652px;top:526px;width:49px;height:25px;line-height:25px;">1.06</div><div class="t" style="left:703px;top:526px;width:53px;height:25px;line-height:25px;">1.05</div><div class="t" style="left:758px;top:526px;width:67px;height:25px;line-height:25px;">11.60</div><div class="t" style="left:827px;top:526px;width:69px;height:25px;line-height:25px;">24.92</div><div class="t k" style="left:898px;top:526px;width:36px;height:25px;line-height:25px;color:#c81212">胜</div><div class="t k" style="left:936px;top:526px;width:36px;height:25px;line-height:25px;color:#1c1cc0">输</div><div class="t k" style="left:974px;top:526px;width:55px;height:25px;line-height:25px;color:#1c1cc0">小</div><div class="t lg" style="left:4px;top:552px;width:79px;height:25px;line-height:25px;">德甲</div><div class="t" style="left:85px;top:552px;width:73px;height:25px;line-height:25px;">24-12-22</div><div class="t" style="left:160px;top:552px;width:105px;height:25px;line-height:25px;"><span class="k" style="color:#1f701f">勒沃库森</span></div><div class="t" style="left:267px;top:552px;width:86px;height:25px;line-height:25px;"><span style="color:#c81212">5-1</span>(1-0)</div><div class="t" style="left:355px;top:552px;width:36px;height:25px;line-height:25px;">4-2</div><div class="t" style="left:393px;top:552px;width:126px;height:25px;line-height:25px;"><span style="color:#111">弗赖堡</span></div><div class="t" style="left:521px;top:552px;width:46px;height:25px;line-height:25px;">0.84</div><div class="t k" style="left:569px;top:552px;width:81px;height:25px;line-height:25px;">一/球半</div><div class="t" style="left:652px;top:552px;width:49px;height:25px;line-height:25px;">1.05</div><div class="t" style="left:703px;top:552px;width:53px;height:25px;line-height:25px;">1.39</div><div class="t" style="left:758px;top:552px;width:67px;height:25px;line-height:25px;">4.92</div><div class="t" style="left:827px;top:552px;width:69px;height:25px;line-height:25px;">7.44</div><div class="t k" style="left:898px;top:552px;width:36px;height:25px;line-height:25px;color:#c81212">胜</div><div class="t k" style="left:936px;top:552px;width:36px;height:25px;line-height:25px;color:#c81212">赢</div><div class="t k" style="left:974px;top:552px;width:55px;height:25px;line-height:25px;color:#c81212">大</div><div class="t lg" style="left:4px;top:578px;width:79px;height:25px;line-height:25px;">德甲</div><div class="t" style="left:85px;top:578px;width:73px;height:25px;line-height:25px;">24-12-14</div><div class="t" style="left:160px;top:578px;width:105px;height:25px;line-height:25px;"><span style="color:#111">奥格斯堡</span></div><div class="t" style="left:267px;top:578px;width:86px;height:25px;line-height:25px;"><span style="color:#c81212">0-2</span>(0-2)</div><div class="t" style="left:355px;top:578px;width:36px;height:25px;line-height:25px;">4-9</div><div class="t" style="left:393px;top:578px;width:126px;height:25px;line-height:25px;"><span class="k" style="color:#1f701f">勒沃库森</span></div><div class="t" style="left:521px;top:578px;width:46px;height:25px;line-height:25px;">0.80</div><div class="t k" style="left:569px;top:578px;width:81px;height:25px;line-height:25px;">受一球</div><div class="t" style="left:652px;top:578px;width:49px;height:25px;line-height:25px;">1.09</div><div class="t" style="left:703px;top:578px;width:53px;height:25px;line-height:25px;">6.01</div><div class="t" style="left:758px;top:578px;width:67px;height:25px;line-height:25px;">4.01</div><div class="t" style="left:827px;top:578px;width:69px;height:25px;line-height:25px;">1.57</div><div class="t k" style="left:898px;top:578px;width:36px;height:25px;line-height:25px;color:#c81212">胜</div><div class="t k" style="left:936px;top:578px;width:36px;height:25px;line-height:25px;color:#c81212">赢</div><div class="t k" style="left:974px;top:578px;width:55px;height:25px;line-height:25px;color:#1c1cc0">小</div><div class="t lg" style="left:4px;top:604px;width:79px;height:25px;line-height:25px;">欧冠杯</div><div class="t" style="left:85px;top:604px;width:73px;height:25px;line-height:25px;">24-12-11</div><div class="t" style="left:160px;top:604px;width:105px;height:25px;line-height:25px;"><span class="k" style="color:#1f701f">勒沃库森</span></div><div class="t" style="left:267px;top:604px;width:86px;height:25px;line-height:25px;"><span style="color:#c81212">1-0</span>(0-0)</div><div class="t" style="left:355px;top:604px;width:36px;height:25px;line-height:25px;">3-1</div><div class="t" style="left:393px;top:604px;width:126px;height:25px;line-height:25px;"><span style="color:#111">国际米兰</span></div><div class="t" style="left:521px;top:604px;width:46px;height:25px;line-height:25px;">0.98</div><div class="t k" style="left:569px;top:604px;width:81px;height:25px;line-height:25px;">平/半</div><div class="t" style="left:652px;top:604px;width:49px;height:25px;line-height:25px;">0.91</div><div class="t" style="left:703px;top:604px;width:53px;height:25px;line-height:25px;">2.22</div><div class="t" style="left:758px;top:604px;width:67px;height:25px;line-height:25px;">3.33</div><div class="t" style="left:827px;top:604px;width:69px;height:25px;line-height:25px;">3.32</div><div class="t k" style="left:898px;top:604px;width:36px;height:25px;line-height:25px;color:#c81212">胜</div><div class="t k" style="left:936px;top:604px;width:36px;height:25px;line-height:25px;color:#c81212">赢</div><div class="t k" style="left:974px;top:604px;width:55px;height:25px;line-height:25px;color:#1c1cc0">小</div><div class="t lg" style="left:4px;top:630px;width:79px;height:25px;line-height:25px;">德甲</div><div class="t" style="left:85px;top:630px;width:73px;height:25px;line-height:25px;">24-12-07</div><div class="t" style="left:160px;top:630px;width:105px;height:25px;line-height:25px;"><span class="k" style="color:#1f701f">勒沃库森</span></div><div class="t" style="left:267px;top:630px;width:86px;height:25px;line-height:25px;"><span style="color:#c81212">2-1</span>(2-0)</div><div class="t" style="left:355px;top:630px;width:36px;height:25px;line-height:25px;">7-4</div><div class="t" style="left:393px;top:630px;width:126px;height:25px;line-height:25px;"><span style="color:#111">圣保利</span></div><div class="t" style="left:521px;top:630px;width:46px;height:25px;line-height:25px;">0.87</div><div class="t k" style="left:569px;top:630px;width:81px;height:25px;line-height:25px;">球半</div><div class="t" style="left:652px;top:630px;width:49px;height:25px;line-height:25px;">1.02</div><div class="t" style="left:703px;top:630px;width:53px;height:25px;line-height:25px;">1.26</div><div class="t" style="left:758px;top:630px;width:67px;height:25px;line-height:25px;">5.95</div><div class="t" style="left:827px;top:630px;width:69px;height:25px;line-height:25px;">10.50</div><div class="t k" style="left:898px;top:630px;width:36px;height:25px;line-height:25px;color:#c81212">胜</div><div class="t k" style="left:936px;top:630px;width:36px;height:25px;line-height:25px;color:#1c1cc0">输</div><div class="t k" style="left:974px;top:630px;width:55px;height:25px;line-height:25px;color:#228822">走</div><div class="t lg" style="left:4px;top:656px;width:79px;height:25px;line-height:25px;">德国杯</div><div class="t" style="left:85px;top:656px;width:73px;height:25px;line-height:25px;">24-12-04</div><div class="t" style="left:160px;top:656px;width:105px;height:25px;line-height:25px;"><span class="rc">1</span><span style="color:#111">拜仁慕尼黑</span></div><div class="t" style="left:267px;top:656px;width:86px;height:25px;line-height:25px;"><span style="color:#c81212">0-1</span>(0-0)</div><div class="t" style="left:355px;top:656px;width:36px;height:25px;line-height:25px;">12-4</div><div class="t" style="left:393px;top:656px;width:126px;height:25px;line-height:25px;"><span class="k" style="color:#1f701f">勒沃库森</span></div><div class="t" style="left:521px;top:656px;width:46px;height:25px;line-height:25px;">1.03</div><div class="t k" style="left:569px;top:656px;width:81px;height:25px;line-height:25px;">一/球半</div><div class="t" style="left:652px;top:656px;width:49px;height:25px;line-height:25px;">0.86</div><div class="t" style="left:703px;top:656px;width:53px;height:25px;line-height:25px;">1.55</div><div class="t" style="left:758px;top:656px;width:67px;height:25px;line-height:25px;">4.20</div><div class="t" style="left:827px;top:656px;width:69px;height:25px;line-height:25px;">5.52</div><div class="t k" style="left:898px;top:656px;width:36px;height:25px;line-height:25px;color:#c81212">胜</div><div class="t k" style="left:936px;top:656px;width:36px;height:25px;line-height:25px;color:#c81212">赢</div><div class="t k" style="left:974px;top:656px;width:55px;height:25px;line-height:25px;color:#1c1cc0">小</div><div class="t lg" style="left:4px;top:682px;width:79px;height:25px;line-height:25px;">德甲</div><div class="t" style="left:85px;top:682px;width:73px;height:25px;line-height:25px;">24-11-30</div><div class="t" style="left:160px;top:682px;width:105px;height:25px;line-height:25px;"><span style="color:#111">柏林联合</span></div><div class="t" style="left:267px;top:682px;width:86px;height:25px;line-height:25px;"><span style="color:#c81212">1-2</span>(1-1)</div><div class="t" style="left:355px;top:682px;width:36px;height:25px;line-height:25px;">1-3</div><div class="t" style="left:393px;top:682px;width:126px;height:25px;line-height:25px;"><span class="k" style="color:#1f701f">勒沃库森</span></div><div class="t" style="left:521px;top:682px;width:46px;height:25px;line-height:25px;">0.98</div><div class="t k" style="left:569px;top:682px;width:81px;height:25px;line-height:25px;">受半球</div><div class="t" style="left:652px;top:682px;width:49px;height:25px;line-height:25px;">0.91</div><div class="t" style="left:703px;top:682px;width:53px;height:25px;line-height:25px;">4.72</div><div class="t" style="left:758px;top:682px;width:67px;height:25px;line-height:25px;">3.56</div><div class="t" style="left:827px;top:682px;width:69px;height:25px;line-height:25px;">1.78</div><div class="t k" style="left:898px;top:682px;width:36px;height:25px;line-height:25px;color:#c81212">胜</div><div class="t k" style="left:936px;top:682px;width:36px;height:25px;line-height:25px;color:#c81212">赢</div><div class="t k" style="left:974px;top:682px;width:55px;height:25px;line-height:25px;color:#c81212">大</div><div class="t" style="left:4px;top:708px;width:1026px;height:25px;line-height:25px;letter-spacing:0.2px">近<span style="color:#c81212">10</span>场,胜10平0负0, 胜率:<span style="color:#c81212">100%</span> 让胜率:<span style="color:#c81212">70%</span> 大率:<span style="color:#c81212">40%</span> 单率:<span style="color:#c81212">60%</span></div>
<div class="r" style="left:3px;top:31px;width:1028px;height:1px;background:#e2e4f6"></div>
</body></html>
